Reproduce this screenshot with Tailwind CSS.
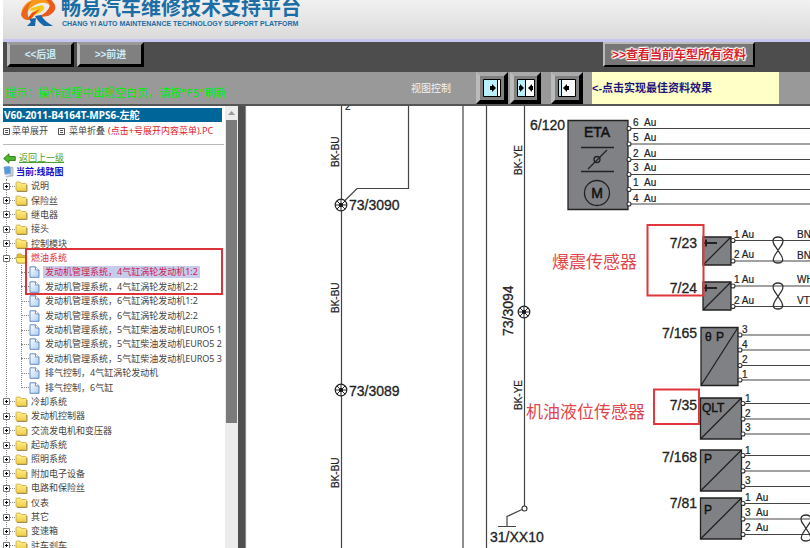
<!DOCTYPE html>
<html lang="zh-CN">
<head>
    <meta charset="UTF-8">
    <meta name="viewport" content="width=device-width, initial-scale=1.0">
    <title>畅易汽车维修技术支持平台</title>
    <script src="https://cdn.jsdelivr.net/npm/@tailwindcss/browser@4"></script>
</head>
<body class="h-screen flex flex-col overflow-hidden bg-white pl-[3px] font-['Noto_Sans','Noto_Sans_CJK_SC',sans-serif]">
    <!-- Shared icons -->
    <svg class="absolute w-0 h-0" aria-hidden="true">
        <linearGradient id="fold" x1="0" y1="0" x2="0" y2="1"><stop offset="0" stop-color="#fff08c"/><stop offset="1" stop-color="#f0cc48"/></linearGradient>
        <linearGradient id="page" x1="0" y1="0" x2="1" y2="1"><stop offset="0" stop-color="#fff"/><stop offset="1" stop-color="#a9cdf5"/></linearGradient>
        <symbol id="plus" viewBox="0 0 7 7"><path d="M.5.5h6v6h-6z" fill="#fff" stroke="#777"/><path d="M2 3.500h3M3.500 2v3" stroke="#000"/></symbol>
        <symbol id="minus" viewBox="0 0 7 7"><path d="M.5.5h6v6h-6z" fill="#fff" stroke="#777"/><path d="M2 3.500h3" stroke="#000"/></symbol>
        <symbol id="folder" viewBox="0 0 13 11"><path d="M1 9V2q0-1 1-1h3l1.500 1.500h4q1 0 1 1V9q0 1-1 1H2q-1 0-1-1z" fill="url(#fold)" stroke="#c9a840" stroke-width=".8"/><path d="M12 4v6.500H2" fill="none" stroke="#8d7a3c" stroke-width=".8"/></symbol>
        <symbol id="folder-open" viewBox="0 0 13 11"><path d="M2 10V2q0-1 1-1h3l1.500 1.500h4V10z" fill="#e5bd35" stroke="#b99a3d" stroke-width=".8"/><path d="M.5 4.500h10l1.500 5.500H2.500z" fill="#fff06a" stroke="#b99a3d" stroke-width=".8"/></symbol>
        <symbol id="doc" viewBox="0 0 11 12"><path d="M1 .8h5.500L10 4v7.300H1z" fill="url(#page)" stroke="#5a7fb8" stroke-width=".9"/><path d="M6.500.8V4H10" fill="#fff" stroke="#5a7fb8" stroke-width=".8"/></symbol>
        <symbol id="node" viewBox="-7 -7 14 14"><circle r="5.800" fill="#fff" stroke="#222" stroke-width="1.200"/><path d="M-5.500 0h11M0-5.500v11M-4-4l8 8M4-4l-8 8" stroke="#222" stroke-width="1"/><circle r="2" fill="#111"/></symbol>
    </svg>

    <!-- Logo header -->
    <header class="shrink-0 h-[42px] flex gap-[5px] pl-[17px] border-b-3 border-[#c6c6f0] bg-linear-to-b from-[#f1f1f1] to-[#dadada]">
        <svg class="w-9 h-7 shrink-0" viewBox="0 0 36 28" aria-hidden="true">
            <path d="M9 20C-2 21-1 5 12 0H31Q40 8 29 15Q25 17 18 17Q28 13 30 6Q25 0 15 5Q3 11 9 20z" fill="#f5981b"/>
            <path d="M31 0Q41 9 28 16L18 17Q29 12 30 5Q29 2 26 0z" fill="#ea5a1e"/>
            <path d="M1 15Q3 6 12 1Q5 8 9 20Q3 20 1 15z" fill="#e9661f"/>
            <path d="M11 8L22 5Q27 8 21 12L15 15L12 18H8L12 12L17 10L10 11z" fill="#fbc619"/>
            <path d="M12 13L20 9L14 15L11 19H7z" fill="#e74c1d"/>
            <path d="M15 16L21 15Q24 21 33 26H24Q18 22 15 16z" fill="#1768a8"/>
            <path d="M9 19L16 18L15 26H7L11 22z" fill="#1768a8"/>
        </svg>
        <div class="text-[#1b6da5] font-bold whitespace-nowrap">
            <h1 class="text-[20px] leading-4">畅易汽车维修技术支持平台</h1>
            <p class="mt-1 pl-px text-[7px] leading-2 font-['Liberation_Sans',sans-serif]">CHANG YI AUTO MAINTENANCE TECHNOLOGY SUPPORT PLATFORM</p>
        </div>
    </header>

    <!-- Toolbar -->
    <div class="shrink-0 h-[30px] flex items-start bg-[#4d4d4d] pl-1 font-['Liberation_Sans','Noto_Sans_CJK_SC',sans-serif] text-[10px] font-bold text-[#c8ecfa]">
        <button class="w-[67px] h-[25px] mr-[3px] border-3 border-t-[#999] border-l-[#bbb] border-r-black border-b-black bg-[#808080]">&lt;&lt;后退</button>
        <button class="w-[67px] h-[25px] border-3 border-t-[#999] border-l-[#bbb] border-r-black border-b-black bg-[#808080]">&gt;&gt;前进</button>
        <button class="w-[152px] h-[25px] ml-auto mr-[55px] border-2 border-t-[#bbb] border-l-[#bbb] border-r-black border-b-black bg-[#777] whitespace-nowrap text-[12px] text-[#d81f2d] text-shadow-[1px_0_1px_#fff,-1px_0_1px_#fff,0_1px_1px_#fff,0_-1px_1px_#fff,1px_1px_1px_#fff,-1px_-1px_1px_#fff,0_0_2px_#fff]">&gt;&gt;查看当前车型所有资料</button>
    </div>
    <div class="shrink-0 h-[34px] flex items-stretch border-b-2 border-[#555] bg-[#999] whitespace-nowrap">
        <p class="self-end pl-0.5 pb-0.5 text-[11px] leading-4 text-[#00f000] font-['DejaVu_Sans','Noto_Sans_CJK_SC',sans-serif]">提示：操作过程中出现空白页，请按"F5"刷新</p>
        <span class="ml-auto mr-[25px] self-center text-[10px] text-[#f2f2f2]">视图控制</span>
        <button class="w-8 border-4 border-t-[#aaa] border-l-[#bbb] border-r-black border-b-black bg-[#808080] flex items-center justify-center" aria-label="左侧最大">
            <svg class="w-5 h-5" viewBox="0 0 20 20"><path d="M1.500 1.500h17v17h-17z" fill="#b9effa" stroke="#000"/><path d="M16 2h2v16h-2z" fill="#fff"/><path d="M15.500 2v16" stroke="#000"/><path d="M8 8h2V6l4 4-4 4v-2H8z"/></svg>
        </button>
        <button class="w-[31px] ml-0.5 border-4 border-t-[#aaa] border-l-[#bbb] border-r-black border-b-black bg-[#808080] flex items-center justify-center" aria-label="左右均分">
            <svg class="w-5 h-5" viewBox="0 0 20 20"><path d="M1.500 1.500h17v17h-17z" fill="#fff" stroke="#000"/><path d="M2 2h7v16H2z" fill="#b9effa"/><path d="M9.500 2v16" stroke="#000"/><path d="M3 8h1V6l4 4-4 4v-2H3zM17 8h-1V6l-4 4 4 4v-2h1z"/></svg>
        </button>
        <button class="w-8 ml-2.5 border-4 border-t-[#aaa] border-l-[#bbb] border-r-black border-b-black bg-[#808080] flex items-center justify-center" aria-label="右侧最大">
            <svg class="w-5 h-5" viewBox="0 0 20 20"><path d="M1.500 1.500h17v17h-17z" fill="#fff" stroke="#000"/><path d="M2 2h2v16H2z" fill="#b9effa"/><path d="M4.500 2v16" stroke="#000"/><path d="M12 8h-2V6l-4 4 4 4v-2h2z"/></svg>
        </button>
        <p class="w-[187px] ml-[9px] mr-[31px] flex items-center bg-[#ffffc8] text-[11px] font-bold text-[#1c1478] font-['Liberation_Sans','Noto_Sans_CJK_SC',sans-serif]">&lt;-点击实现最佳资料效果</p>
    </div>

    <div class="flex-1 min-h-0 flex">
        <!-- Menu tree -->
        <aside class="w-[222px] shrink-0 flex flex-col overflow-hidden pt-0.5 text-[9px] leading-[14px] text-[#444] whitespace-nowrap">
            <h2 class="shrink-0 w-[219px] bg-[#006699] pl-px font-bold text-[10px] text-white">V60-2011-B4164T-MPS6-左舵</h2>
            <div class="shrink-0 h-[23px] w-[221px] flex pt-0.5 border-b border-[#bbb]">
                <button class="h-[14px] flex items-center gap-0.5"><svg class="w-[7px] h-[7px]" viewBox="0 0 7 7"><path d="M.5.5h6v6h-6zM2 2.500h3M2 4.500h3" fill="none" stroke="#555"/></svg>菜单展开</button>
                <button class="h-[14px] ml-2.5 flex items-center gap-1"><svg class="w-[7px] h-[7px]" viewBox="0 0 7 7"><path d="M.5.5h6v6h-6zM2 2.500h3M2 4.500h3" fill="none" stroke="#555"/></svg>菜单折叠</button>
                <span class="ml-[3px] text-[#e0202c]">(点击+号展开内容菜单).PC</span>
            </div>
            <div class="shrink-0 mt-1.5 flex items-center gap-[3px]">
                <svg class="w-[13px] h-[11px]" viewBox="0 0 13 11" aria-hidden="true"><path d="M.6 5.500L6 .8v2.700h6.300v4H6v2.700z" fill="#4fb52d" stroke="#2c7d18" stroke-width=".9"/></svg>
                <a href="#" class="text-[#4a9e2f] underline">返回上一级</a>
            </div>
            <div class="shrink-0 flex items-center gap-0.5 text-[#1414c8] font-bold">
                <svg class="w-[11px] h-3" viewBox="0 0 11 12" aria-hidden="true"><path d="M1 1l6-.5 1 7-6 .8z" fill="#4f9ae6" stroke="#7ba0c8" stroke-width=".8"/><path d="M8 1l2 .5V10H7z" fill="#c8d4e2" stroke="#8699b0" stroke-width=".6"/><path d="M2 10l5-1 2 1.500-5 1z" fill="#b7c5d8"/></svg>
                <span>当前:线路图</span>
            </div>
            <ul class="relative flex-1 min-h-0 -mb-[5px] grid auto-rows-fr before:absolute before:inset-y-0 before:left-[3px] before:border-l before:border-dotted before:border-[#888]">
                <li class="relative flex items-center"><svg class="w-[7px] h-[7px]"><use href="#plus"/></svg><i class="w-[5px] border-t border-dotted border-[#888]"></i><svg class="w-[13px] h-[11px] mr-[3px]"><use href="#folder"/></svg>说明</li>
                <li class="relative flex items-center"><svg class="w-[7px] h-[7px]"><use href="#plus"/></svg><i class="w-[5px] border-t border-dotted border-[#888]"></i><svg class="w-[13px] h-[11px] mr-[3px]"><use href="#folder"/></svg>保险丝</li>
                <li class="relative flex items-center"><svg class="w-[7px] h-[7px]"><use href="#plus"/></svg><i class="w-[5px] border-t border-dotted border-[#888]"></i><svg class="w-[13px] h-[11px] mr-[3px]"><use href="#folder"/></svg>继电器</li>
                <li class="relative flex items-center"><svg class="w-[7px] h-[7px]"><use href="#plus"/></svg><i class="w-[5px] border-t border-dotted border-[#888]"></i><svg class="w-[13px] h-[11px] mr-[3px]"><use href="#folder"/></svg>接头</li>
                <li class="relative flex items-center"><svg class="w-[7px] h-[7px]"><use href="#plus"/></svg><i class="w-[5px] border-t border-dotted border-[#888]"></i><svg class="w-[13px] h-[11px] mr-[3px]"><use href="#folder"/></svg>控制模块</li>
                <li class="relative row-span-10 grid auto-rows-fr">
                    <div class="flex items-center text-[#e0303c]"><svg class="w-[7px] h-[7px]"><use href="#minus"/></svg><i class="w-[5px] border-t border-dotted border-[#888]"></i><svg class="w-[13px] h-[11px] mr-[3px]"><use href="#folder-open"/></svg>燃油系统</div>
                    <ul class="row-span-9 relative ml-[18px] grid auto-rows-fr before:absolute before:top-0 before:bottom-[7px] before:left-0 before:border-l before:border-dotted before:border-[#888]">
                        <li class="flex items-center"><i class="w-2 border-t border-dotted border-[#888]"></i><svg class="w-[11px] h-3 mr-[3px]"><use href="#doc"/></svg><a href="#" class="leading-[12px] px-0.5 bg-[#c6cdec] text-[#d02052]">发动机管理系统，4气缸涡轮发动机1:2</a></li>
                        <li class="flex items-center"><i class="w-2 border-t border-dotted border-[#888]"></i><svg class="w-[11px] h-3 mr-[5px]"><use href="#doc"/></svg><a href="#">发动机管理系统，4气缸涡轮发动机2:2</a></li>
                        <li class="flex items-center"><i class="w-2 border-t border-dotted border-[#888]"></i><svg class="w-[11px] h-3 mr-[5px]"><use href="#doc"/></svg><a href="#">发动机管理系统，6气缸涡轮发动机1:2</a></li>
                        <li class="flex items-center"><i class="w-2 border-t border-dotted border-[#888]"></i><svg class="w-[11px] h-3 mr-[5px]"><use href="#doc"/></svg><a href="#">发动机管理系统，6气缸涡轮发动机2:2</a></li>
                        <li class="flex items-center"><i class="w-2 border-t border-dotted border-[#888]"></i><svg class="w-[11px] h-3 mr-[5px]"><use href="#doc"/></svg><a href="#">发动机管理系统，5气缸柴油发动机EURO5 1</a></li>
                        <li class="flex items-center"><i class="w-2 border-t border-dotted border-[#888]"></i><svg class="w-[11px] h-3 mr-[5px]"><use href="#doc"/></svg><a href="#">发动机管理系统，5气缸柴油发动机EURO5 2</a></li>
                        <li class="flex items-center"><i class="w-2 border-t border-dotted border-[#888]"></i><svg class="w-[11px] h-3 mr-[5px]"><use href="#doc"/></svg><a href="#">发动机管理系统，5气缸柴油发动机EURO5 3</a></li>
                        <li class="flex items-center"><i class="w-2 border-t border-dotted border-[#888]"></i><svg class="w-[11px] h-3 mr-[5px]"><use href="#doc"/></svg><a href="#">排气控制，4气缸涡轮发动机</a></li>
                        <li class="flex items-center"><i class="w-2 border-t border-dotted border-[#888]"></i><svg class="w-[11px] h-3 mr-[5px]"><use href="#doc"/></svg><a href="#">排气控制，6气缸</a></li>
                    </ul>
                    <!-- Marked entries -->
                    <div class="absolute -top-[3px] left-[22px] w-[198px] h-[47px] border-2 border-[#dc3238]"></div>
                </li>
                <li class="relative flex items-center"><svg class="w-[7px] h-[7px]"><use href="#plus"/></svg><i class="w-[5px] border-t border-dotted border-[#888]"></i><svg class="w-[13px] h-[11px] mr-[3px]"><use href="#folder"/></svg>冷却系统</li>
                <li class="relative flex items-center"><svg class="w-[7px] h-[7px]"><use href="#plus"/></svg><i class="w-[5px] border-t border-dotted border-[#888]"></i><svg class="w-[13px] h-[11px] mr-[3px]"><use href="#folder"/></svg>发动机控制器</li>
                <li class="relative flex items-center"><svg class="w-[7px] h-[7px]"><use href="#plus"/></svg><i class="w-[5px] border-t border-dotted border-[#888]"></i><svg class="w-[13px] h-[11px] mr-[3px]"><use href="#folder"/></svg>交流发电机和变压器</li>
                <li class="relative flex items-center"><svg class="w-[7px] h-[7px]"><use href="#plus"/></svg><i class="w-[5px] border-t border-dotted border-[#888]"></i><svg class="w-[13px] h-[11px] mr-[3px]"><use href="#folder"/></svg>起动系统</li>
                <li class="relative flex items-center"><svg class="w-[7px] h-[7px]"><use href="#plus"/></svg><i class="w-[5px] border-t border-dotted border-[#888]"></i><svg class="w-[13px] h-[11px] mr-[3px]"><use href="#folder"/></svg>照明系统</li>
                <li class="relative flex items-center"><svg class="w-[7px] h-[7px]"><use href="#plus"/></svg><i class="w-[5px] border-t border-dotted border-[#888]"></i><svg class="w-[13px] h-[11px] mr-[3px]"><use href="#folder"/></svg>附加电子设备</li>
                <li class="relative flex items-center"><svg class="w-[7px] h-[7px]"><use href="#plus"/></svg><i class="w-[5px] border-t border-dotted border-[#888]"></i><svg class="w-[13px] h-[11px] mr-[3px]"><use href="#folder"/></svg>电路和保险丝</li>
                <li class="relative flex items-center"><svg class="w-[7px] h-[7px]"><use href="#plus"/></svg><i class="w-[5px] border-t border-dotted border-[#888]"></i><svg class="w-[13px] h-[11px] mr-[3px]"><use href="#folder"/></svg>仪表</li>
                <li class="relative flex items-center"><svg class="w-[7px] h-[7px]"><use href="#plus"/></svg><i class="w-[5px] border-t border-dotted border-[#888]"></i><svg class="w-[13px] h-[11px] mr-[3px]"><use href="#folder"/></svg>其它</li>
                <li class="relative flex items-center"><svg class="w-[7px] h-[7px]"><use href="#plus"/></svg><i class="w-[5px] border-t border-dotted border-[#888]"></i><svg class="w-[13px] h-[11px] mr-[3px]"><use href="#folder"/></svg>变速箱</li>
                <li class="relative flex items-center"><svg class="w-[7px] h-[7px]"><use href="#plus"/></svg><i class="w-[5px] border-t border-dotted border-[#888]"></i><svg class="w-[13px] h-[11px] mr-[3px]"><use href="#folder"/></svg>驻车刹车</li>
            </ul>
        </aside>

        <!-- Scrollbar -->
        <div class="shrink-0 w-[13px] bg-[#ececec] flex flex-col">
            <div class="h-[14px] flex items-center justify-center"><svg class="w-[7px] h-1" viewBox="0 0 7 4"><path d="M0 4l3.500-4L7 4z" fill="#999"/></svg></div>
            <div class="h-[303px] mx-px bg-[#7b7b7b]"></div>
        </div>
        <div class="shrink-0 w-[7px] bg-[#4f4f4f]"></div>

        <!-- Wiring diagram -->
        <main class="flex-1 min-w-0 bg-white">
            <svg class="w-full h-full font-['Liberation_Sans','Noto_Sans_CJK_SC',sans-serif]" viewBox="245 106 565 442" preserveAspectRatio="xMinYMin slice">
                <!-- Wires -->
                <g fill="none" stroke="#444" stroke-width="1.200">
                    <path d="M245.500 106v442" stroke="#888"/>
                    <path d="M341.500 106v442M524.500 106v400M463 106v442M486.500 106v442"/>
                    <path d="M408.500 106v82.500H357L345 200.500"/>
                    <path d="M522 509.500L507 516.500V526.500M498 526.500h18"/>
                    <path d="M630 128.500h180M630 144h180M630 159.500h180M630 174.500h180M630 189.500h180M630 204h180"/>
                    <path d="M734 240.500h76M734 261h76M734 286h76M734 306.500h76"/>
                    <path d="M741 335h69M741 350h69M741 365.500h69M741 380h69"/>
                    <path d="M744 403.500h66M744 419h66M744 434h66M744 455.500h66M744 471h66M744 486.500h66M744 503.500h66M744 519h66M744 534.500h66"/>
                </g>
                <!-- Twisted pairs -->
                <g fill="none" stroke="#333" stroke-width="1.300">
                    <path id="twist" d="M778 237c-6 0-6 5-3 9l6 9c3 5 2 8-3 8s-6-3-3-8l6-9c3-4 3-9-3-9z"/>
                    <use href="#twist" y="46"/>
                    <use href="#twist" x="28" y="278"/>
                </g>
                <use href="#node" x="334" y="198" width="14" height="14"/>
                <use href="#node" x="334" y="383" width="14" height="14"/>
                <use href="#node" x="517" y="305" width="14" height="14"/>
                <!-- Components -->
                <g fill="#808184" stroke="#222" stroke-width="1.300">
                    <path d="M568 120.500h60v89h-60z"/>
                    <path d="M703 237h28v28h-28zM703 265l28-28"/>
                    <path d="M703 282h28v28h-28zM703 310l28-28"/>
                    <path d="M701 327.500h37v58h-37zM701 385.500l37-58"/>
                    <path d="M700.500 398h41v41h-41zM700.500 439l41-41"/>
                    <path d="M700.500 450h41v41h-41zM700.500 491l41-41"/>
                    <path d="M700.500 498h41v41h-41zM700.500 539l41-41"/>
                    <path d="M581 147.500h33M581 171.500h33M588 169l19-19" fill="none"/>
                    <circle cx="597" cy="159.500" r="3" fill="none"/>
                    <circle cx="597" cy="193" r="12.500" fill="none"/>
                    <path d="M704 243h13M706 239.500v7M704 288h13M706 284.500v7" stroke-width="2"/>
                </g>
                <!-- Pins -->
                <g fill="#fff" stroke="#333" stroke-width="1.100">
                    <circle cx="524.500" cy="508.500" r="2.500"/>
                    <circle cx="629" cy="128.500" r="2"/><circle cx="629" cy="144" r="2"/><circle cx="629" cy="159.500" r="2"/>
                    <circle cx="629" cy="174.500" r="2"/><circle cx="629" cy="189.500" r="2"/><circle cx="629" cy="204" r="2"/>
                    <circle cx="733" cy="240.500" r="2"/><circle cx="733" cy="261" r="2"/><circle cx="733" cy="286" r="2"/><circle cx="733" cy="306.500" r="2"/>
                    <circle cx="740" cy="335" r="2"/><circle cx="740" cy="350" r="2"/><circle cx="740" cy="365.500" r="2"/><circle cx="740" cy="380" r="2"/>
                    <circle cx="743" cy="403.500" r="2"/><circle cx="743" cy="419" r="2"/><circle cx="743" cy="434" r="2"/>
                    <circle cx="743" cy="455.500" r="2"/><circle cx="743" cy="471" r="2"/><circle cx="743" cy="486.500" r="2"/>
                    <circle cx="743" cy="503.500" r="2"/><circle cx="743" cy="519" r="2"/><circle cx="743" cy="534.500" r="2"/>
                </g>
                <!-- Component names -->
                <g fill="#222" stroke="#222" stroke-width=".3" font-size="14">
                    <text x="349" y="210">73/3090</text>
                    <text x="349" y="396">73/3089</text>
                    <text x="530" y="130">6/120</text>
                    <text x="490" y="542">31/XX10</text>
                    <text transform="translate(513 336) rotate(-90)">73/3094</text>
                    <g text-anchor="end">
                        <text x="697" y="248">7/23</text>
                        <text x="697" y="293">7/24</text>
                        <text x="697" y="338">7/165</text>
                        <text x="697" y="410">7/35</text>
                        <text x="697" y="462">7/168</text>
                        <text x="697" y="508">7/81</text>
                    </g>
                    <g text-anchor="middle" fill="#111" stroke="#111" stroke-width=".5">
                        <text x="597" y="137">ETA</text>
                        <text x="597" y="198">M</text>
                    </g>
                </g>
                <g fill="#111" stroke="#111" stroke-width=".4" font-size="12">
                    <text x="705" y="341">θ</text><text x="716" y="341">P</text>
                    <text x="702" y="412">QLT</text>
                    <text x="704" y="463">P</text>
                    <text x="704" y="514">P</text>
                </g>
                <!-- Wire colours and pin numbers -->
                <g fill="#222" stroke="#222" stroke-width=".2" font-size="10">
                    <text x="345" y="110">2</text>
                    <text transform="translate(339 167) rotate(-90)">BK-BU</text>
                    <text transform="translate(339 313) rotate(-90)">BK-BU</text>
                    <text transform="translate(339 488) rotate(-90)">BK-BU</text>
                    <text transform="translate(522 175) rotate(-90)">BK-YE</text>
                    <text transform="translate(522 410) rotate(-90)">BK-YE</text>
                    <text x="633" y="126">6</text><text x="644" y="126">Au</text>
                    <text x="633" y="141">5</text><text x="644" y="141">Au</text>
                    <text x="633" y="157">2</text><text x="644" y="157">Au</text>
                    <text x="633" y="171">3</text><text x="644" y="171">Au</text>
                    <text x="633" y="186">1</text><text x="644" y="186">Au</text>
                    <text x="633" y="202">4</text><text x="644" y="202">Au</text>
                    <text x="734" y="238">1 Au</text><text x="797" y="238">BN</text>
                    <text x="734" y="258">2 Au</text><text x="797" y="259">BN</text>
                    <text x="734" y="283">1 Au</text><text x="797" y="283">WH</text>
                    <text x="734" y="304">2 Au</text><text x="797" y="304">VT</text>
                    <text x="742" y="333">3</text><text x="742" y="348">4</text><text x="742" y="363">2</text><text x="742" y="378">1</text>
                    <text x="745" y="402">1</text><text x="745" y="417">2</text><text x="745" y="431">3</text>
                    <text x="745" y="454">1</text><text x="745" y="469">2</text><text x="745" y="484">3</text>
                    <text x="745" y="501">1</text><text x="756" y="501">Au</text>
                    <text x="745" y="516">3</text><text x="756" y="516">Au</text>
                    <text x="745" y="531">2</text><text x="756" y="531">Au</text>
                </g>
                <!-- Annotations -->
                <g fill="none" stroke="#e0363c" stroke-width="2">
                    <path d="M647.500 225h56v70.500h-56zM654 389.500h45v34.500h-45z"/>
                </g>
                <g fill="#e0464c" font-size="17">
                    <text x="552" y="268">爆震传感器</text>
                    <text x="526" y="418">机油液位传感器</text>
                </g>
            </svg>
        </main>
    </div>
</body>
</html>
